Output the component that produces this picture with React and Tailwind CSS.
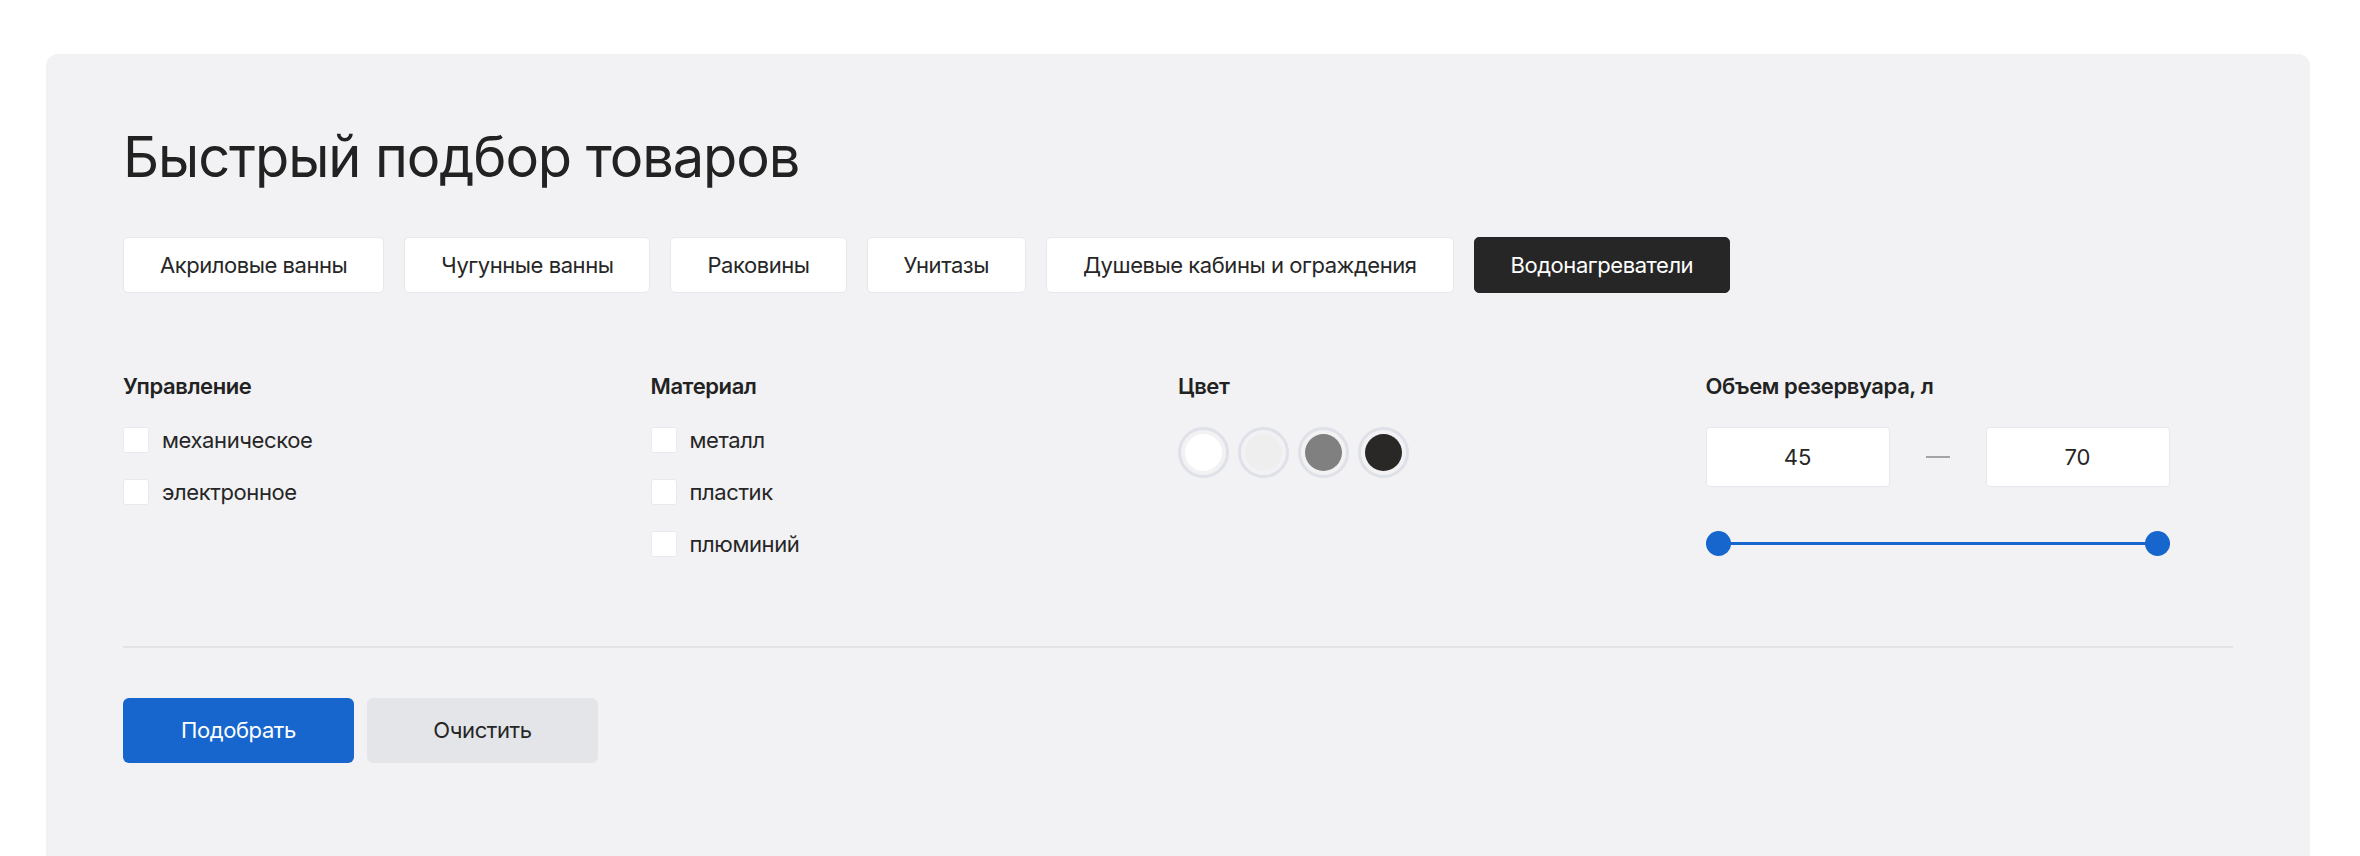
import { useState } from "react";

const tabs = [
  "Акриловые ванны",
  "Чугунные ванны",
  "Раковины",
  "Унитазы",
  "Душевые кабины и ограждения",
  "Водонагреватели",
];

const controlOptions = ["механическое", "электронное"];
const materialOptions = ["металл", "пластик", "плюминий"];
const colors = ["bg-white", "bg-[#edeeed]", "bg-[#808080]", "bg-[#292827]"];

const Checkbox = ({ label }) => (
  <label className="flex items-center gap-[13px] h-[26px] cursor-pointer">
    <span className="w-[26px] h-[26px] rounded-[3px] bg-white border border-[#e8e9ef] shrink-0" />
    <span className="text-[22px] leading-none text-[#262626] tracking-[-0.4px]">{label}</span>
  </label>
);

const FilterTitle = ({ children }) => (
  <h3 className="text-[22px] leading-[1.21] font-semibold text-[#222] tracking-[-0.4px] mb-[28px]">{children}</h3>
);

const App = () => {
  const [active, setActive] = useState(5);

  return (
    <div className="min-h-screen bg-white pt-[54px] pl-[46px] pr-[50px]" style={{ fontFamily: "Inter, 'Noto Sans', sans-serif" }}>
      <div className="bg-[#f2f2f4] rounded-t-[12px] px-[77px] pt-[70px] pb-[120px]">
        <h1 className="text-[56px] leading-[1.21] font-normal text-[#222] tracking-[-1.1px]">
          Быстрый подбор товаров
        </h1>

        {/* Tabs */}
        <div className="flex gap-[20px] mt-[45px]">
          {tabs.map((t, i) => (
            <button
              key={t}
              onClick={() => setActive(i)}
              className={`h-[56px] px-[36px] rounded-[5px] text-[22px] leading-none tracking-[-0.45px] border ${
                i === active
                  ? "bg-[#262626] border-[#262626] text-white"
                  : "bg-white border-[#e6e8ee] text-[#262626]"
              }`}
            >
              {t}
            </button>
          ))}
        </div>

        {/* Filters */}
        <div className="grid grid-cols-4 mt-[80px]">
          <div>
            <FilterTitle>Управление</FilterTitle>
            <div className="flex flex-col gap-[26px]">
              {controlOptions.map((o) => (
                <Checkbox key={o} label={o} />
              ))}
            </div>
          </div>

          <div>
            <FilterTitle>Материал</FilterTitle>
            <div className="flex flex-col gap-[26px]">
              {materialOptions.map((o) => (
                <Checkbox key={o} label={o} />
              ))}
            </div>
          </div>

          <div>
            <FilterTitle>Цвет</FilterTitle>
            <div className="flex gap-[9px]">
              {colors.map((c) => (
                <span
                  key={c}
                  className="w-[51px] h-[51px] rounded-full border-[3px] border-[#dfe1e8] p-[4px] flex"
                >
                  <span className={`w-full h-full rounded-full ${c}`} />
                </span>
              ))}
            </div>
          </div>

          <div>
            <FilterTitle>Объем резервуара, л</FilterTitle>
            <div className="w-[464px]">
              <div className="flex items-center justify-between">
                <div className="w-[184px] h-[60px] bg-white border border-[#e6e8ee] rounded-[4px] flex items-center justify-center text-[22px] text-[#262626]">
                  45
                </div>
                <span className="w-[24px] h-[2px] bg-[#a5a5a8]" />
                <div className="w-[184px] h-[60px] bg-white border border-[#e6e8ee] rounded-[4px] flex items-center justify-center text-[22px] text-[#262626]">
                  70
                </div>
              </div>
              <div className="relative mt-[44px] h-[25px] flex items-center">
                <div className="w-full h-[3px] bg-[#1766ce]" />
                <span className="absolute left-0 top-0 w-[25px] h-[25px] rounded-full bg-[#1766ce]" />
                <span className="absolute right-0 top-0 w-[25px] h-[25px] rounded-full bg-[#1766ce]" />
              </div>
            </div>
          </div>
        </div>

        <div className="h-[2px] bg-[#e2e2e7] mt-[89px]" />

        <div className="flex gap-[13px] mt-[50px]">
          <button className="w-[231px] h-[65px] rounded-[6px] bg-[#1766ce] text-white text-[22px] tracking-[-0.4px]">
            Подобрать
          </button>
          <button className="w-[231px] h-[65px] rounded-[6px] bg-[#e4e5e9] text-[#262626] text-[22px] tracking-[-0.4px]">
            Очистить
          </button>
        </div>
      </div>
    </div>
  );
};

export default App;
